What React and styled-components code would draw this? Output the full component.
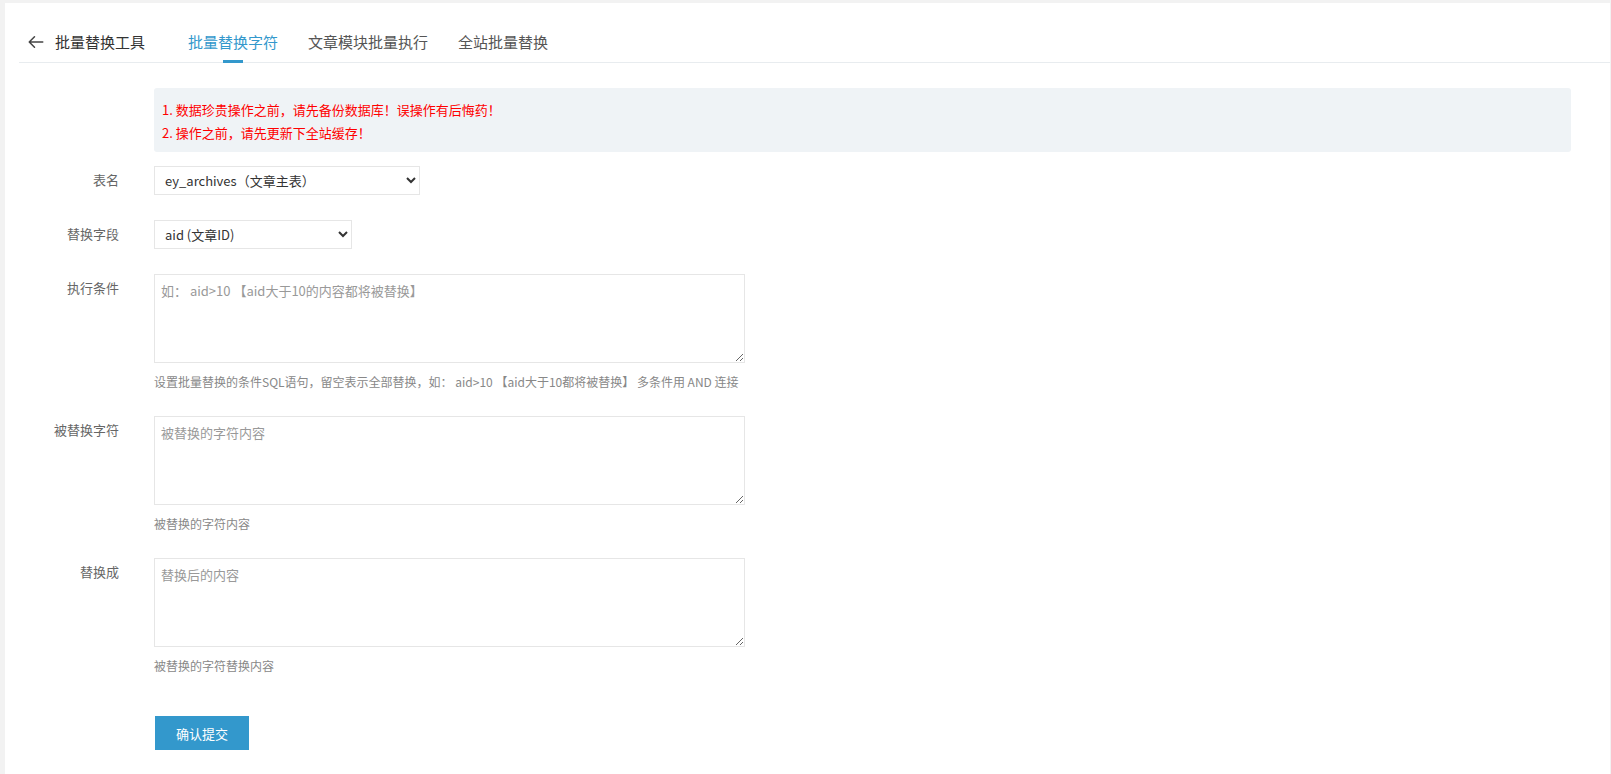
import React from "react";
import styled, { createGlobalStyle } from "styled-components";

const Global = createGlobalStyle`
  html,body{margin:0;background:#f2f2f2;font-family:"Microsoft YaHei","Noto Sans CJK SC","Liberation Sans",sans-serif;}
`;
const Panel = styled.div`
  margin:3px 1px 0 5px;background:#fff;height:771px;box-sizing:border-box;padding:0 0 0 14px;
`;
const TabBar = styled.div`
  display:flex;align-items:stretch;height:60px;box-sizing:border-box;padding-top:18px;border-bottom:1px solid #e8ecef;
`;
const Back = styled.div`
  display:flex;align-items:center;gap:10px;font-size:15px;color:#333;padding-left:8px;margin-right:28px;
`;
const Tab = styled.div`
  font-size:15px;color:${p=>p.$active?"#3398cc":"#555"};margin:0 15px;display:flex;align-items:center;position:relative;
  ${p=>p.$active&&`&:after{content:"";position:absolute;left:50%;margin-left:-10px;width:20px;height:3px;bottom:-1px;background:#3398cc;}`}
`;
const Body = styled.div`padding:25px 25px 0 0;`;
const Row = styled.div`display:flex;margin-bottom:${p=>p.$mb||25}px;`;
const Label = styled.div`width:100px;text-align:right;font-size:13px;color:#666;padding-top:${p=>p.$pt||4}px;margin-right:35px;flex-shrink:0;`;
const Field = styled.div`flex:1;display:flex;flex-direction:column;`;
const Alert = styled.div`
  background:#eff3f6;border-radius:3px;height:64px;box-sizing:border-box;padding:10px 8px;color:#f00;font-size:13px;line-height:23px;margin-right:14px;
`;
const Select = styled.select`
  width:${p=>p.$w}px;height:29px;border:1px solid #e6e6e6;background:#fff;font-size:13px;color:#333;padding:0 6px;font-family:inherit;outline:none;
`;
const Area = styled.textarea`
  width:591px;height:89px;box-sizing:border-box;border:1px solid #e6e6e6;padding:6px;font-size:13px;font-family:inherit;resize:both;outline:none;
  &::placeholder{color:#999;}
`;
const Help = styled.div`font-size:12px;color:#888;margin-top:10px;`;
const Button = styled.button`
  width:94px;height:34px;background:#3398cc;color:#fff;border:none;font-size:13px;font-family:inherit;margin-left:1px;
`;

export default function App(){
  return <>
    <Global/>
    <Panel>
      <TabBar>
        <Back>
          <svg width="18" height="18" viewBox="0 0 24 24" fill="none" stroke="#444" strokeWidth="2" strokeLinecap="round" strokeLinejoin="round"><path d="M21 12H3.5M10 5l-7 7 7 7"/></svg>
          批量替换工具
        </Back>
        <Tab $active>批量替换字符</Tab>
        <Tab>文章模块批量执行</Tab>
        <Tab>全站批量替换</Tab>
      </TabBar>
      <Body>
        <Row $mb={14}><Label/><Field><Alert>1. 数据珍贵操作之前，请先备份数据库！误操作有后悔药！<br/>2. 操作之前，请先更新下全站缓存！</Alert></Field></Row>
        <Row><Label>表名</Label><Field><Select $w={266}><option>ey_archives（文章主表）</option></Select></Field></Row>
        <Row><Label>替换字段</Label><Field><Select $w={198}><option>aid (文章ID)</option></Select></Field></Row>
        <Row $mb={26}><Label>执行条件</Label><Field><Area placeholder="如： aid>10 【aid大于10的内容都将被替换】"/><Help>设置批量替换的条件SQL语句，留空表示全部替换，如： aid>10 【aid大于10都将被替换】 多条件用 AND 连接</Help></Field></Row>
        <Row $mb={26}><Label>被替换字符</Label><Field><Area placeholder="被替换的字符内容"/><Help>被替换的字符内容</Help></Field></Row>
        <Row $mb={42}><Label>替换成</Label><Field><Area placeholder="替换后的内容"/><Help>被替换的字符替换内容</Help></Field></Row>
        <Row><Label/><Field><div><Button>确认提交</Button></div></Field></Row>
      </Body>
    </Panel>
  </>;
}
